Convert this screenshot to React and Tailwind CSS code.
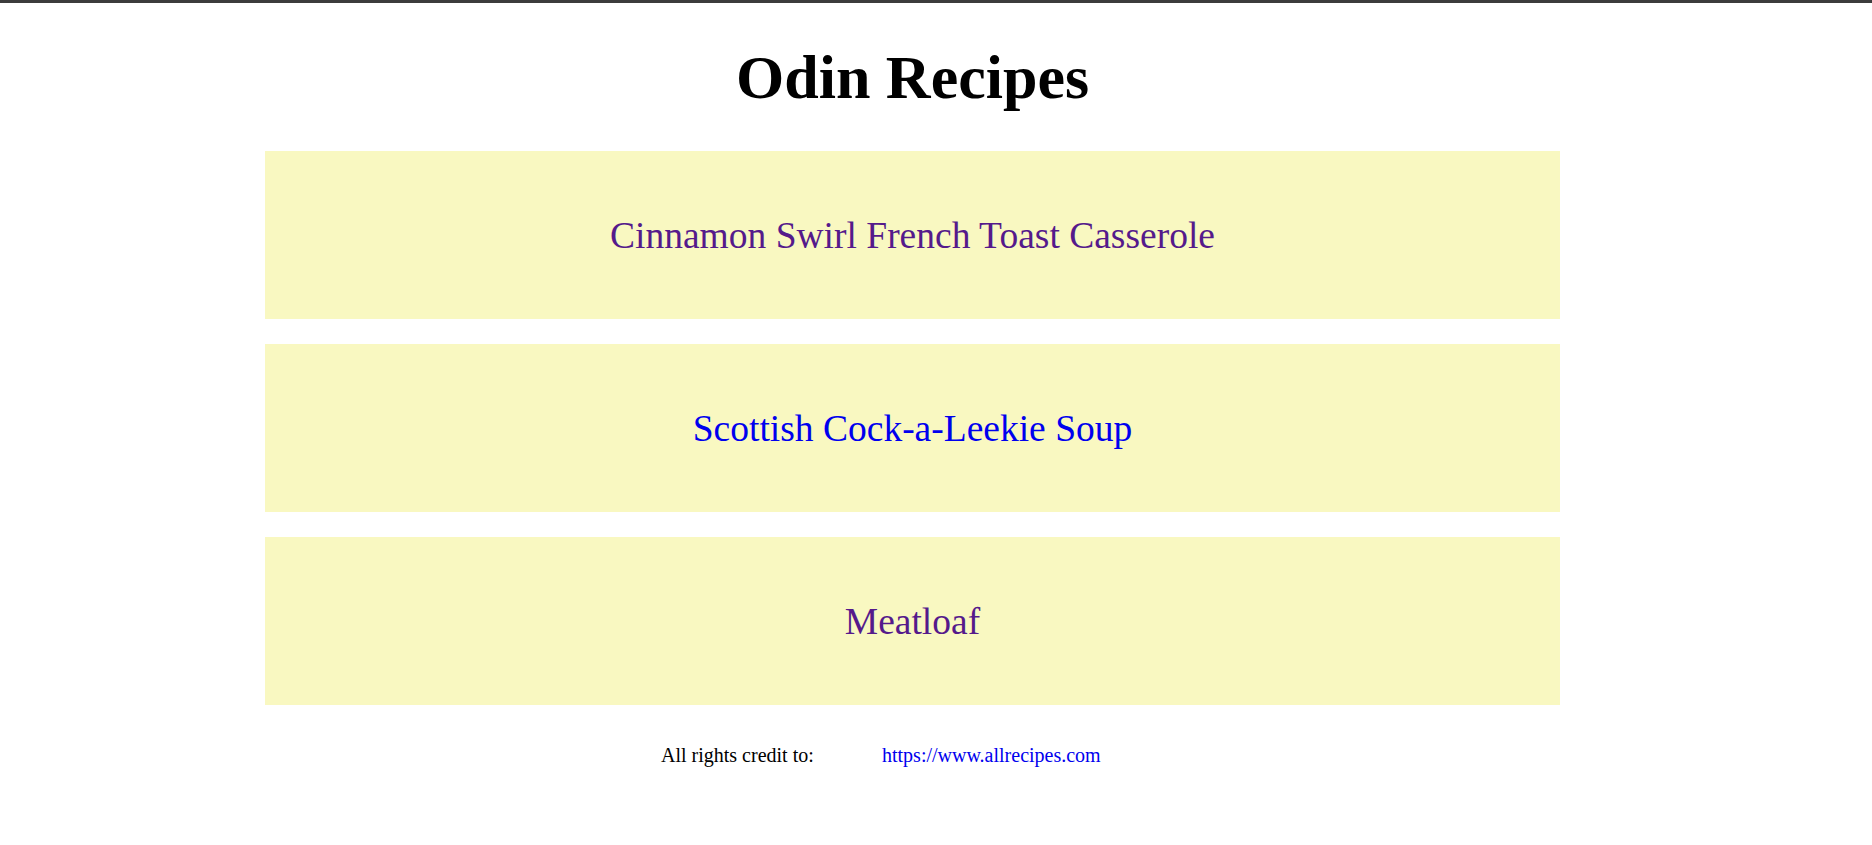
import React from "react";

const recipes = [
  { name: "Cinnamon Swirl French Toast Casserole", visited: true },
  { name: "Scottish Cock-a-Leekie Soup", visited: false },
  { name: "Meatloaf", visited: true },
];

const RecipeCard = ({ name, visited }) => (
  <div className="h-[168px] w-[1295px] bg-[#f9f8c1] flex items-center justify-center pt-[2px]">
    <a
      href="#"
      className={`text-[37.5px] leading-none ${visited ? "text-[#551a8b]" : "text-[#0000ee]"}`}
    >
      {name}
    </a>
  </div>
);

export default function App() {
  return (
    <div className="min-h-[845px] bg-white border-t-[3px] border-[#3c3c3c] font-['Liberation_Serif',serif] text-black">
      <div className="pr-[47px] flex flex-col items-center">
        <h1 className="mt-[43px] text-[62px] leading-none font-bold">Odin Recipes</h1>

        <div className="mt-[43px] flex flex-col gap-[25px]">
          {recipes.map((r) => (
            <RecipeCard key={r.name} name={r.name} visited={r.visited} />
          ))}
        </div>
      </div>

      {/* footer credit */}
      <div className="mt-[40px] pl-[661px] flex text-[20px] leading-[20px]">
        <span className="w-[221px]">All rights credit to:</span>
        <a href="#" className="text-[#0000ee]">https://www.allrecipes.com</a>
      </div>
    </div>
  );
}
